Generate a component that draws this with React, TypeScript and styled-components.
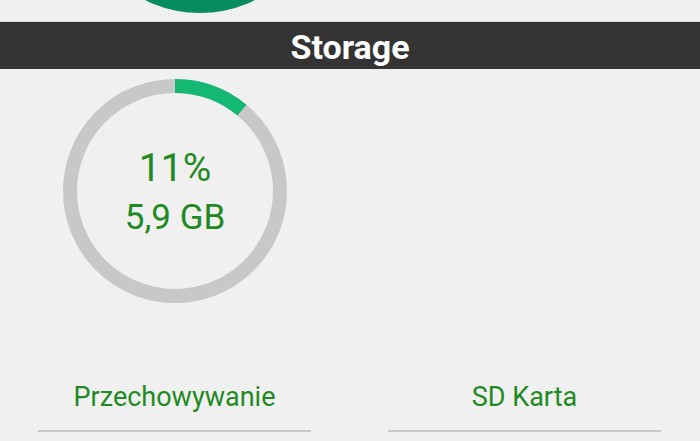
import React from "react";
import styled, { createGlobalStyle } from "styled-components";

const Global = createGlobalStyle`
  html, body { margin: 0; padding: 0; background: #f0f0f0; }
  body { font-family: Roboto, "Noto Sans", "Liberation Sans", sans-serif; width: 700px; height: 441px; overflow: hidden; }
`;

const Page = styled.div`
  width: 700px;
  height: 441px;
  background: #f0f0f0;
  display: flex;
  flex-direction: column;
  overflow: hidden;
`;

const TopStrip = styled.div`
  height: 21px;
  overflow: hidden;
  display: flex;
  align-items: flex-end;
  padding-left: 77px;
  border-bottom: 1px solid #d6d6d6;
`;

const Avatar = styled.div`
  flex-shrink: 0;
  width: 246px;
  height: 246px;
  border-radius: 50%;
  background: #078d5e;
  margin-bottom: 8px;
`;

const TitleBar = styled.div`
  height: 47px;
  box-sizing: border-box;
  padding-top: 4px;
  background: #333333;
  color: #ffffff;
  font-weight: 700;
  font-size: 34px;
  line-height: 43px;
  text-align: center;
`;

const Columns = styled.div`
  display: grid;
  grid-template-columns: 350px 350px;
`;

const RingCell = styled.div`
  padding-top: 10px;
  display: flex;
  justify-content: center;
`;

const RingStack = styled.div`
  display: grid;
  width: 224px;
  height: 224px;
  & > * { grid-area: 1 / 1; }
`;

const RingText = styled.div`
  display: flex;
  flex-direction: column;
  align-items: center;
  padding-top: 67px;
  color: #1f8a22;
`;

const Percent = styled.div`
  font-size: 39px;
  line-height: 44px;
`;

const Amount = styled.div`
  font-size: 35px;
  line-height: 55px;
`;

const Tabs = styled(Columns)`
  margin-top: 79px;
`;

const Tab = styled.div`
  padding: 0 39px 0 38px;
`;

const TabLabel = styled.div`
  font-size: 27px;
  line-height: 30px;
  color: #1f8a22;
  text-align: center;
  padding-bottom: 18px;
  border-bottom: 2px solid #c9c9c9;
`;

const Ring: React.FC<{ pct: number }> = ({ pct }) => {
  const r = 105;
  const c = 2 * Math.PI * r;
  return (
    <svg width="224" height="224" viewBox="0 0 224 224">
      <circle cx="112" cy="112" r={r} fill="none" stroke="#c8c8c8" strokeWidth="14" />
      <circle
        cx="112"
        cy="112"
        r={r}
        fill="none"
        stroke="#13b872"
        strokeWidth="14"
        strokeDasharray={`${(c * pct) / 100} ${c}`}
        transform="rotate(-90 112 112)"
      />
    </svg>
  );
};

export default function App() {
  return (
    <Page>
      <Global />
      <TopStrip>
        <Avatar />
      </TopStrip>
      <TitleBar>Storage</TitleBar>
      <Columns>
        <RingCell>
          <RingStack>
            <Ring pct={11} />
            <RingText>
              <Percent>11%</Percent>
              <Amount>5,9 GB</Amount>
            </RingText>
          </RingStack>
        </RingCell>
        <div />
      </Columns>
      <Tabs>
        <Tab>
          <TabLabel>Przechowywanie</TabLabel>
        </Tab>
        <Tab>
          <TabLabel>SD Karta</TabLabel>
        </Tab>
      </Tabs>
    </Page>
  );
}
